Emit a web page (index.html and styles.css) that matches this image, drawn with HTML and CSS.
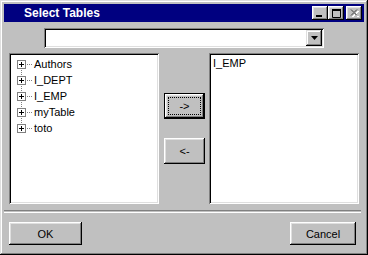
FILE: index.html
```html
<!DOCTYPE html>
<html lang="en">

<head>
    <meta charset="UTF-8">
    <title>Select Tables</title>
    <link rel="stylesheet" href="styles.css">
</head>

<body>
    <div class="window">
        <div class="titlebar">
            <span class="title">Select Tables</span>
            <div class="title-buttons">
                <span class="tbtn">
                    <svg width="8" height="7" viewBox="0 0 8 7"><rect x="0" y="5" width="6" height="2" fill="#000"/></svg>
                </span>
                <span class="tbtn">
                    <svg width="9" height="9" viewBox="0 0 9 9"><path d="M0.5 0.5h8v8h-8z" fill="none" stroke="#000"/><rect x="0" y="0" width="9" height="2" fill="#000"/></svg>
                </span>
                <span class="tbtn close">
                    <svg width="9" height="8" viewBox="0 0 9 8">
                        <path d="M1 1l6 6M2 1l6 6M7 1l-6 6M8 1l-6 6" stroke="#fff" transform="translate(1 1)"/>
                        <path d="M0 0l6 6M1 0l6 6M6 0l-6 6M7 0l-6 6" stroke="#808080" transform="translate(0.5 0.5)"/>
                    </svg>
                </span>
            </div>
        </div>

        <div class="content">
            <div class="combo">
                <div class="combo-field"></div>
                <span class="combo-arrow">
                    <svg width="7" height="4" viewBox="0 0 7 4"><path d="M0 0h7l-3.5 4z" fill="#000"/></svg>
                </span>
            </div>

            <div class="lists">
                <ul class="listbox tree">
                    <li class="tree-item"><span class="plus"></span><span class="stub"></span>Authors</li>
                    <li class="tree-item"><span class="plus"></span><span class="stub"></span>I_DEPT</li>
                    <li class="tree-item"><span class="plus"></span><span class="stub"></span>I_EMP</li>
                    <li class="tree-item"><span class="plus"></span><span class="stub"></span>myTable</li>
                    <li class="tree-item"><span class="plus"></span><span class="stub"></span>toto</li>
                </ul>

                <div class="movers">
                    <button class="btn default"><span class="focus">-&gt;</span></button>
                    <button class="btn">&lt;-</button>
                </div>

                <ul class="listbox selected">
                    <li>I_EMP</li>
                </ul>
            </div>
        </div>

        <div class="separator"></div>

        <div class="footer">
            <button class="btn ok">OK</button>
            <button class="btn cancel">Cancel</button>
        </div>
    </div>
</body>

</html>
```

FILE: styles.css
```css
body {
    margin: 0;
    font-family: "Liberation Sans", Arial, sans-serif;
    font-size: 11px;
    color: #000;
}

.window {
    width: 368px;
    height: 255px;
    box-sizing: border-box;
    padding: 4px;
    background: #c0c0c0;
    box-shadow: inset -1px -1px #000, inset 1px 1px #dfdfdf, inset -2px -2px #808080, inset 2px 2px #fff;
}

/* Title bar */
.titlebar {
    height: 18px;
    background: #000080;
    display: flex;
    align-items: center;
    padding-right: 2px;
}

.title {
    flex: 1;
    padding-left: 20px;
    color: #fff;
    font-weight: bold;
    font-size: 12px;
}

.title-buttons {
    display: flex;
}

.tbtn {
    width: 16px;
    height: 14px;
    box-sizing: border-box;
    background: #c0c0c0;
    box-shadow: inset -1px -1px #000, inset 1px 1px #fff, inset -2px -2px #808080, inset 2px 2px #dfdfdf;
    display: flex;
    align-items: center;
    justify-content: center;
}

.tbtn.close {
    margin-left: 2px;
}

/* Content */
.content {
    padding: 6px 5px 0;
}

.combo {
    width: 280px;
    height: 20px;
    margin-left: 35px;
    box-sizing: border-box;
    padding: 2px;
    background: #fff;
    box-shadow: inset 1px 1px #808080, inset -1px -1px #fff, inset 2px 2px #000, inset -2px -2px #dfdfdf;
    display: flex;
}

.combo-field {
    flex: 1;
}

.combo-arrow {
    width: 16px;
    height: 16px;
    box-sizing: border-box;
    background: #c0c0c0;
    box-shadow: inset -1px -1px #000, inset 1px 1px #dfdfdf, inset -2px -2px #808080, inset 2px 2px #fff;
    display: flex;
    align-items: center;
    justify-content: center;
}

.lists {
    margin-top: 5px;
    display: flex;
    height: 151px;
}

.listbox {
    margin: 0;
    list-style: none;
    width: 150px;
    box-sizing: border-box;
    background: #fff;
    box-shadow: inset 1px 1px #808080, inset -1px -1px #fff, inset 2px 2px #000, inset -2px -2px #dfdfdf;
}

.tree {
    padding: 3px 0 0 8px;
}

.tree-item {
    position: relative;
    height: 16px;
    display: flex;
    align-items: center;
}

/* dotted line joining the plus boxes */
.tree-item:not(:last-child)::after {
    content: "";
    position: absolute;
    left: 4px;
    top: 12px;
    height: 9px;
    border-left: 1px dotted #808080;
}

.plus {
    width: 9px;
    height: 9px;
    box-sizing: border-box;
    border: 1px solid #808080;
    background: #fff;
    position: relative;
}

.plus::before,
.plus::after {
    content: "";
    position: absolute;
    background: #000;
}

.plus::before {
    left: 1px;
    top: 3px;
    width: 5px;
    height: 1px;
}

.plus::after {
    left: 3px;
    top: 1px;
    width: 1px;
    height: 5px;
}

.stub {
    width: 5px;
    margin: 0 2px 0 1px;
    border-top: 1px dotted #808080;
}

.selected {
    padding: 4px 0 0 4px;
}

.movers {
    width: 41px;
    margin: 0 4px 0 5px;
    padding-top: 40px;
    display: flex;
    flex-direction: column;
    gap: 19px;
}

/* Buttons */
.btn {
    font-family: "Liberation Sans", Arial, sans-serif;
    font-size: 11px;
    color: #000;
    background: #c0c0c0;
    border: none;
    padding: 0;
    box-sizing: border-box;
    box-shadow: inset -1px -1px #000, inset 1px 1px #fff, inset -2px -2px #808080, inset 2px 2px #dfdfdf;
}

.movers .btn {
    width: 41px;
    height: 26px;
}

.btn.default {
    border: 1px solid #000;
    padding: 3px;
    display: flex;
}

.focus {
    flex: 1;
    border: 1px dotted #000;
    display: flex;
    align-items: center;
    justify-content: center;
}

.separator {
    margin: 6px 3px 0 0;
    height: 1px;
    border-top: 1px solid #808080;
    border-bottom: 1px solid #fff;
}

.footer {
    display: flex;
    justify-content: space-between;
    padding: 9px 8px 0 5px;
}

.btn.ok {
    width: 73px;
    height: 23px;
}

.btn.cancel {
    width: 66px;
    height: 23px;
}
```
